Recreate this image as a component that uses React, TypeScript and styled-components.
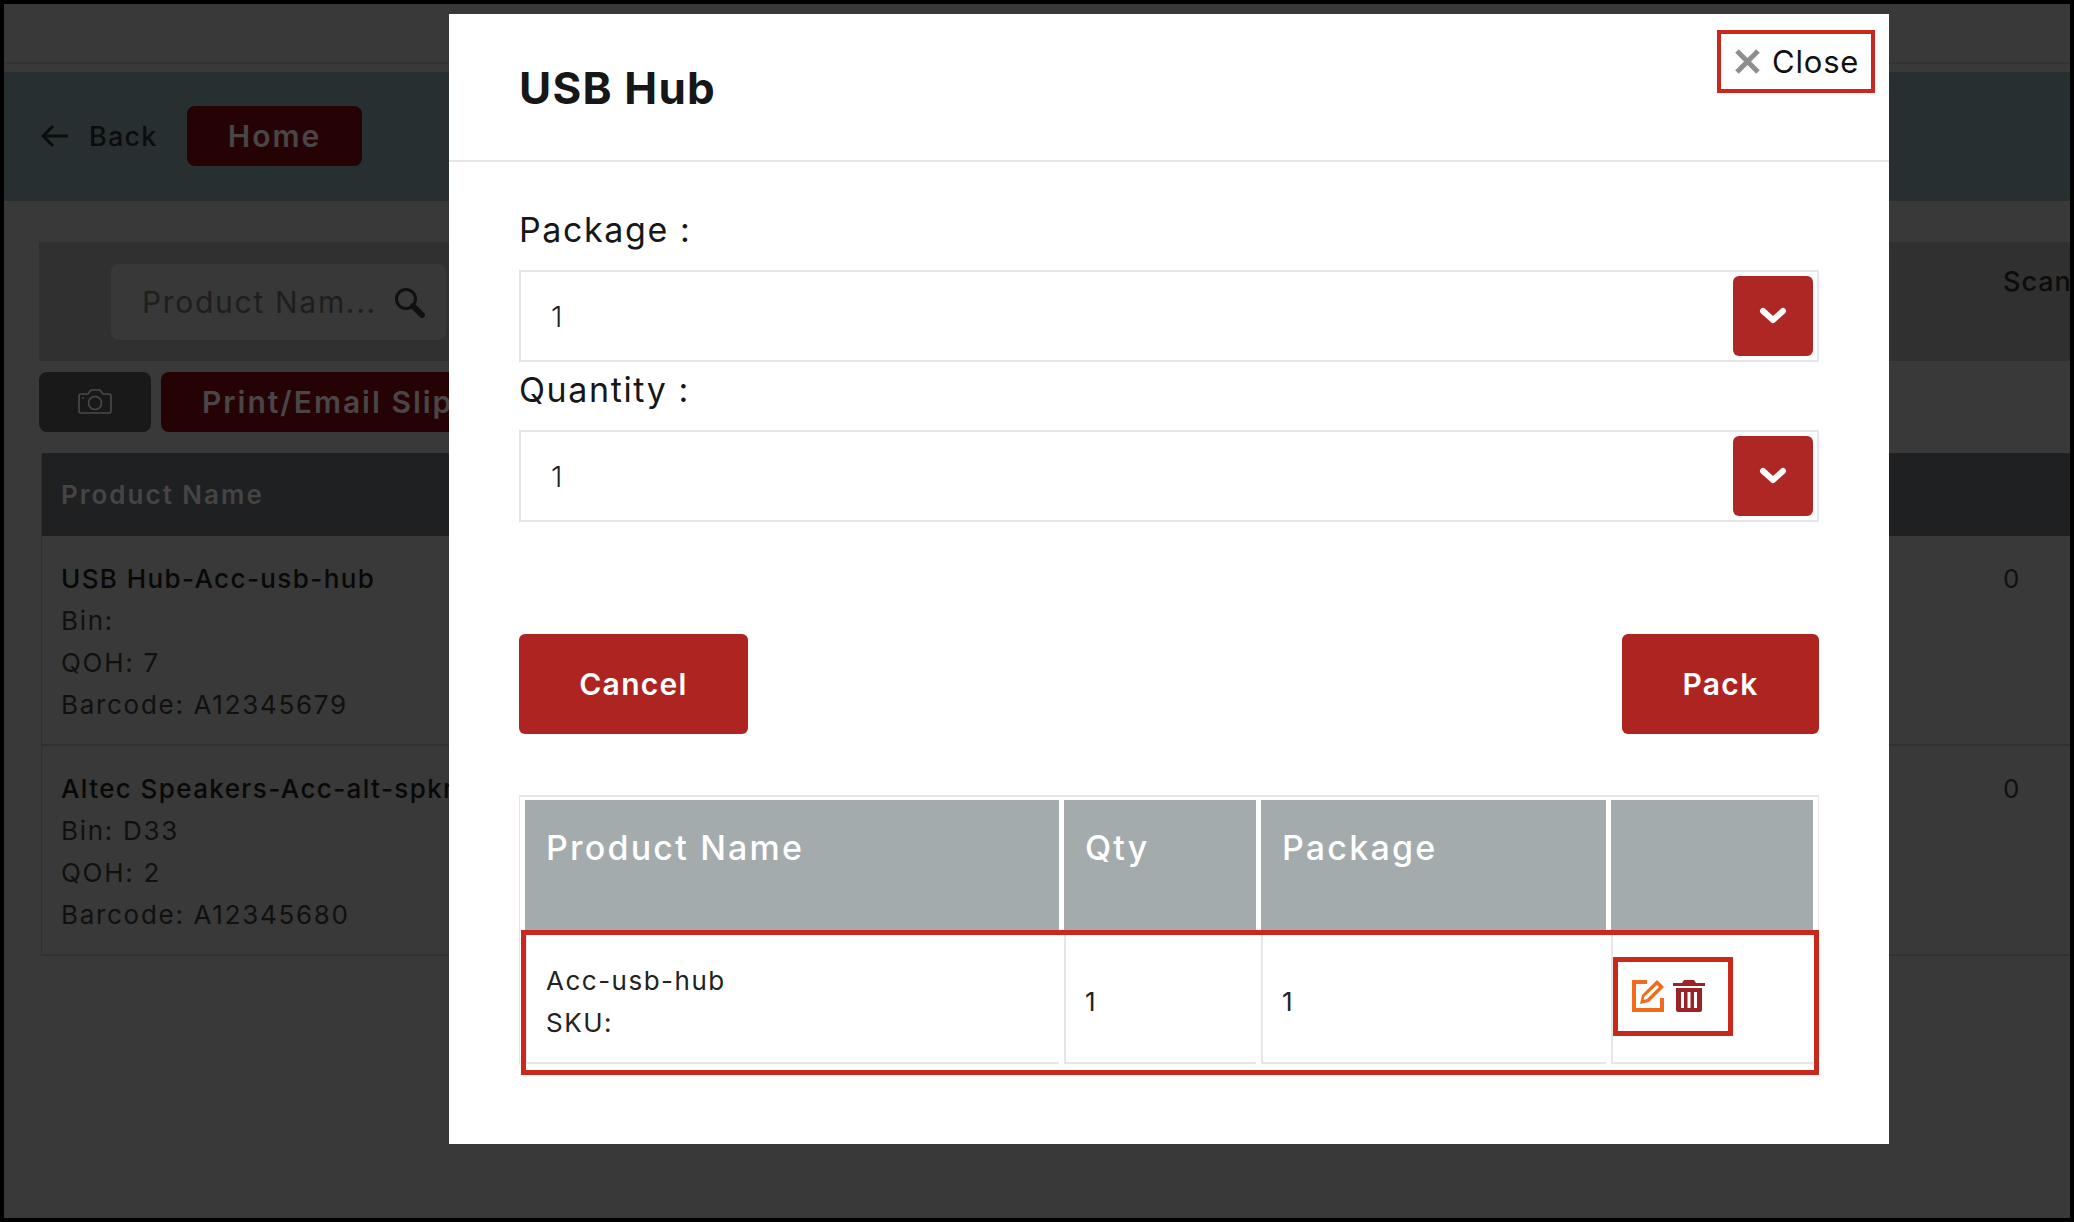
import React from 'react';
import styled, { createGlobalStyle } from 'styled-components';

const GlobalStyle = createGlobalStyle`
  html, body {
    margin: 0;
    padding: 0;
    background: #000;
    font-family: Inter, "Liberation Sans", sans-serif;
  }
  * { box-sizing: border-box; }
`

const Frame = styled.div`
  position: relative;
  width: 2074px;
  height: 1222px;
  border: 4px solid #000;
  background: #393939;
  overflow: hidden;
`

const TopBar = styled.div`
  height: 60px;
  border-bottom: 2px solid #333;
  margin-bottom: 8px;
`

const NavBar = styled.div`
  height: 129px;
  background: #282f30;
  display: flex;
  align-items: center;
  padding: 0 0 1px 37px;
  margin-bottom: 41px;
`

const BackLink = styled.span`
  display: flex;
  align-items: center;
  gap: 20px;
  width: 146px;
  font-size: 27px;
  letter-spacing: 1.2px;
  font-weight: 500;
  color: #0a0c0d;
`

const DarkRedButton = styled.div`
  background: #250304;
  color: #4a4546;
  border-radius: 8px;
  height: 60px;
  display: flex;
  align-items: center;
  font-size: 30px;
  letter-spacing: 2px;
  font-weight: 600;
`

const HomeButton = styled(DarkRedButton)`
  width: 175px;
  justify-content: center;
`

const Content = styled.div`
  padding-left: 35px;
  width: 2300px;
`

const FilterPanel = styled.div`
  height: 119px;
  background: #303030;
  display: flex;
  padding: 22px 0 0 72px;
  position: relative;
`

const SearchBox = styled.div`
  width: 335px;
  height: 76px;
  background: #383838;
  border-radius: 8px;
  display: flex;
  align-items: center;
  padding-left: 31px;
  gap: 17px;
  font-size: 30px;
  letter-spacing: 1.7px;
  color: #1e1e1e;
`

const ScanLabel = styled.span`
  position: absolute;
  left: 1964px;
  top: 23px;
  font-size: 27px;
  letter-spacing: 1px;
  font-weight: 500;
  color: #0c0c0c;
`

const ActionRow = styled.div`
  display: flex;
  gap: 10px;
  margin-top: 11px;
`

const CameraButton = styled.div`
  width: 112px;
  height: 60px;
  background: #191919;
  border-radius: 8px;
  display: flex;
  align-items: center;
  justify-content: center;
`

const PrintButton = styled(DarkRedButton)`
  width: 400px;
  padding-left: 41px;
`

const ProductTable = styled.div`
  margin: 21px 0 0 2px;
  border-left: 1px solid #313131;
`

const ProductHead = styled.div`
  height: 83px;
  background: #1f2022;
  display: flex;
  align-items: center;
  padding-left: 19px;
  font-size: 26px;
  letter-spacing: 2px;
  font-weight: 600;
  color: #454545;
`

const ProductRow = styled.div`
  height: 210px;
  padding: 22px 0 0 19px;
  border-bottom: 2px solid #313131;
  display: grid;
  grid-template-columns: 1942px auto;
  font-size: 26px;
  letter-spacing: 1.7px;
  line-height: 42px;
  color: #101010;
`

const ProductTitle = styled.div`
  font-weight: 500;
  letter-spacing: 1.4px;
  color: #080808;
`

const Modal = styled.div`
  position: absolute;
  left: 445px;
  top: 10px;
  width: 1440px;
  height: 1130px;
  background: #fff;
  display: flex;
  flex-direction: column;
`

const ModalHeader = styled.div`
  height: 148px;
  flex: none;
  border-bottom: 2px solid #e6e6e6;
  position: relative;
  padding: 47px 0 0 70px;
`

const ModalTitle = styled.h2`
  margin: 0;
  font-size: 44px;
  letter-spacing: 1.2px;
  line-height: 54px;
  font-weight: 700;
  color: #171717;
`

const CloseButton = styled.div`
  position: absolute;
  right: 14px;
  top: 16px;
  width: 158px;
  height: 63px;
  border: 4px solid #c9281d;
  display: flex;
  align-items: center;
  padding-left: 14px;
  gap: 12px;
  font-size: 31px;
  letter-spacing: 0.8px;
  color: #111;
`

const ModalBody = styled.div`
  padding: 47px 70px 0;
`

const FieldLabel = styled.div`
  font-size: 34px;
  letter-spacing: 1.6px;
  line-height: 42px;
  font-weight: 400;
  color: #171717;
  margin-bottom: 19px;
`

const SelectField = styled.div`
  height: 92px;
  border: 2px solid #e6e6e6;
  display: flex;
  align-items: center;
  justify-content: space-between;
  padding: 0 4px 0 30px;
  font-size: 29px;
  font-weight: 300;
  color: #222;
  margin-bottom: 7px;
`

const ChevronButton = styled.div`
  width: 80px;
  height: 80px;
  background: #af2725;
  border-radius: 6px;
  display: flex;
  align-items: center;
  justify-content: center;
`

const ButtonRow = styled.div`
  display: flex;
  justify-content: space-between;
  margin-top: 112px;
`

const SolidButton = styled.div<{ $width: number }>`
  width: ${props => props.$width}px;
  height: 100px;
  background: #ad2421;
  border-radius: 6px;
  color: #fff;
  font-size: 30px;
  letter-spacing: 1.3px;
  font-weight: 600;
  display: flex;
  align-items: center;
  justify-content: center;
`

const TableWrap = styled.div`
  position: relative;
  margin-top: 61px;
`

const PackTable = styled.table`
  width: 1300px;
  table-layout: fixed;
  border-collapse: separate;
  border-spacing: 5px 0;
  border-style: solid;
  border-color: #e6e6e6;
  border-width: 2px 1px 0;
  padding-top: 3px;
`

const HeadCell = styled.th`
  height: 130px;
  background: #a3abad;
  color: #fff;
  font-size: 34px;
  letter-spacing: 2.2px;
  font-weight: 500;
  text-align: left;
  vertical-align: top;
  padding: 27px 0 0 21px;
`

const BodyCell = styled.td`
  height: 134px;
  padding: 12px 0 0 19px;
  border-left: 2px solid #e6e6e6;
  border-bottom: 2px solid #e6e6e6;
  font-size: 26px;
  letter-spacing: 1.5px;
  font-weight: 400;
  line-height: 42px;
  color: #222;
`

const ActionCell = styled(BodyCell)`
  padding: 0;
`

const IconBox = styled.div`
  width: 120px;
  height: 79px;
  border: 5px solid #c9281d;
  display: flex;
  align-items: center;
  gap: 9px;
  padding-left: 14px;
`

const RowHighlight = styled.div`
  position: absolute;
  left: 2px;
  top: 135px;
  width: 1298px;
  height: 145px;
  border: 5px solid #c9281d;
  pointer-events: none;
`

const BackArrow = () => (
  <svg width="28" height="24" viewBox="0 0 28 24" fill="none" stroke="#0a0c0d" strokeWidth="3">
    <path d="M27 12H2M12 2 2 12l10 10" />
  </svg>
)

const SearchIcon = () => (
  <svg width="31" height="31" viewBox="0 0 31 31" fill="none" stroke="#101010">
    <circle cx="12" cy="12" r="9.5" strokeWidth="3" />
    <path d="M19 19l9 9" strokeWidth="6" strokeLinecap="round" />
  </svg>
)

const CameraIcon = () => (
  <svg width="34" height="26" viewBox="0 0 34 26" fill="none" stroke="#4a4a4a" strokeWidth="1.6">
    <path d="M3 5h7l3-4h9l3 4h6a2 2 0 0 1 2 2v15a2 2 0 0 1-2 2H3a2 2 0 0 1-2-2V7a2 2 0 0 1 2-2z" />
    <circle cx="17" cy="14" r="6.5" />
    <path d="M4 9h2" />
  </svg>
)

const CloseIcon = () => (
  <svg width="25" height="25" viewBox="0 0 25 25" stroke="#8e8e8e" strokeWidth="5">
    <path d="M2 2l21 21M23 2 2 23" />
  </svg>
)

const Chevron = () => (
  <svg width="28" height="18" viewBox="0 0 28 18" fill="none" stroke="#fff" strokeWidth="6" strokeLinecap="round" strokeLinejoin="round">
    <path d="M4 4l10 9 10-9" />
  </svg>
)

const EditIcon = () => (
  <svg width="32" height="32" viewBox="0 0 32 32" fill="none">
    <path d="M15 2H2v28h28V18" stroke="#f26a1b" strokeWidth="4" />
    <path d="M25 0l7 7-15 15-9 2 2-9z" fill="#f26a1b" />
    <path d="M25 5l2 2-12 12-3.500 1 1-3.500z" fill="#fff" />
  </svg>
)

const TrashIcon = () => (
  <svg width="32" height="32" viewBox="0 0 32 32" fill="#9b2226">
    <path d="M11 0h10l2 3h9v3H0V3h9z" />
    <path d="M3 8h26v22a2 2 0 0 1-2 2H5a2 2 0 0 1-2-2zM8 12v16h3V12zm6.500 0v16h3V12zM21 12v16h3V12z" fillRule="evenodd" />
  </svg>
)

const products = [
  { title: 'USB Hub-Acc-usb-hub', bin: 'Bin:', qoh: 'QOH: 7', barcode: 'Barcode: A12345679' },
  { title: 'Altec Speakers-Acc-alt-spkr', bin: 'Bin: D33', qoh: 'QOH: 2', barcode: 'Barcode: A12345680' },
]

const App = () => {
  return (
    <Frame>
      <GlobalStyle />
      <TopBar />
      <NavBar>
        <BackLink><BackArrow />Back</BackLink>
        <HomeButton>Home</HomeButton>
      </NavBar>
      <Content>
        <FilterPanel>
          <SearchBox>Product Nam... <SearchIcon /></SearchBox>
          <ScanLabel>Scan</ScanLabel>
        </FilterPanel>
        <ActionRow>
          <CameraButton><CameraIcon /></CameraButton>
          <PrintButton>Print/Email Slip</PrintButton>
        </ActionRow>
        <ProductTable>
          <ProductHead>Product Name</ProductHead>
          {products.map(item => (
            <ProductRow key={item.title}>
              <div>
                <ProductTitle>{item.title}</ProductTitle>
                <div>{item.bin}</div>
                <div>{item.qoh}</div>
                <div>{item.barcode}</div>
              </div>
              <div>0</div>
            </ProductRow>
          ))}
        </ProductTable>
      </Content>
      <Modal>
        <ModalHeader>
          <ModalTitle>USB Hub</ModalTitle>
          <CloseButton><CloseIcon />Close</CloseButton>
        </ModalHeader>
        <ModalBody>
          <FieldLabel>Package :</FieldLabel>
          <SelectField>1<ChevronButton><Chevron /></ChevronButton></SelectField>
          <FieldLabel>Quantity :</FieldLabel>
          <SelectField>1<ChevronButton><Chevron /></ChevronButton></SelectField>
          <ButtonRow>
            <SolidButton $width={229}>Cancel</SolidButton>
            <SolidButton $width={197}>Pack</SolidButton>
          </ButtonRow>
          <TableWrap>
            <PackTable>
              <colgroup>
                <col style={{ width: 534 }} />
                <col style={{ width: 192 }} />
                <col style={{ width: 345 }} />
                <col />
              </colgroup>
              <thead>
                <tr>
                  <HeadCell>Product Name</HeadCell>
                  <HeadCell>Qty</HeadCell>
                  <HeadCell>Package</HeadCell>
                  <HeadCell />
                </tr>
              </thead>
              <tbody>
                <tr>
                  <BodyCell>Acc-usb-hub<br />SKU:</BodyCell>
                  <BodyCell>1</BodyCell>
                  <BodyCell>1</BodyCell>
                  <ActionCell>
                    <IconBox><EditIcon /><TrashIcon /></IconBox>
                  </ActionCell>
                </tr>
              </tbody>
            </PackTable>
            <RowHighlight />
          </TableWrap>
        </ModalBody>
      </Modal>
    </Frame>
  );
};

export default App;
